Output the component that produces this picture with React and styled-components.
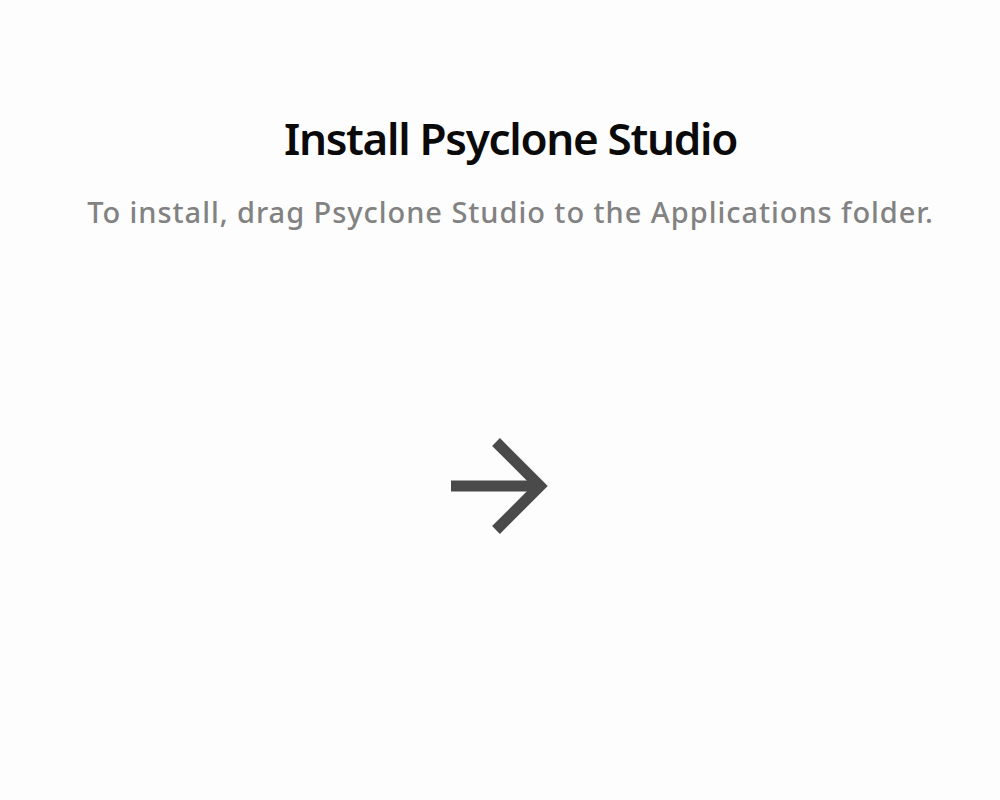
import React from 'react';
import styled, { createGlobalStyle } from 'styled-components';

const GlobalStyle = createGlobalStyle`
  html, body {
    margin: 0;
    padding: 0;
    background: #fdfdfd;
  }
  body {
    font-family: "Noto Sans", "Noto Sans CJK KR", sans-serif;
  }
`;

const Page = styled.div`
  width: 1000px;
  height: 800px;
  display: flex;
  flex-direction: column;
  align-items: center;
  padding-top: 108px;
  box-sizing: border-box;
`;

const TextBlock = styled.div`
  display: flex;
  flex-direction: column;
  align-items: center;
  padding-left: 21px;
`;

const Title = styled.h1`
  margin: 0;
  font-size: 44px;
  line-height: 60px;
  font-weight: 600;
  letter-spacing: -1.3px;
  color: #0a0a0a;
`;

const Subtitle = styled.p`
  margin: 24px 0 0;
  font-size: 29px;
  line-height: 40px;
  font-weight: 500;
  letter-spacing: 0.95px;
  color: #828282;
`;

const ArrowWrap = styled.div`
  margin-top: 204px;
  width: 100px;
  height: 100px;
  color: #4a4a4a;
`;

const Arrow = () => (
  <svg width="100" height="100" viewBox="0 0 100 100" fill="none">
    <path d="M1 50 H90" stroke="currentColor" strokeWidth="11" />
    <path d="M46 6 L90 50 L46 94" stroke="currentColor" strokeWidth="11" strokeLinejoin="miter" />
  </svg>
);

const App = () => (
  <>
    <GlobalStyle />
    <Page>
      <TextBlock>
        <Title>Install Psyclone Studio</Title>
        <Subtitle>To install, drag Psyclone Studio to the Applications folder.</Subtitle>
      </TextBlock>
      <ArrowWrap>
        <Arrow />
      </ArrowWrap>
    </Page>
  </>
);

export default App;
